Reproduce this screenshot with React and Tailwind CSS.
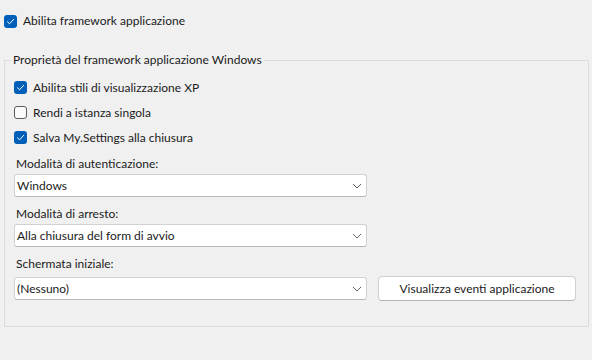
const font = { fontFamily: 'Lato, "Noto Sans", sans-serif' };

const Checkbox = ({ checked, label }) => (
  <label className="flex items-center gap-[6px]">
    {checked ? (
      <span className="flex h-[13px] w-[13px] items-center justify-center rounded-[3px] bg-[#005fb8]">
        <svg width="9" height="9" viewBox="0 0 9 9" fill="none">
          <path d="M1.5 4.8 L3.6 6.8 L7.6 2.4" stroke="white" strokeWidth="1" strokeLinecap="round" strokeLinejoin="round" />
        </svg>
      </span>
    ) : (
      <span className="h-[13px] w-[13px] rounded-[3px] border border-[#5d5d5d] bg-[#fbfbfb]" />
    )}
    <span>{label}</span>
  </label>
);

const Combo = ({ value }) => (
  <div className="flex h-[23px] w-[353px] items-center justify-between rounded-[3px] border border-[#d2d2d2] border-b-[#b8b8b8] bg-white pl-[2px] pr-[4px]">
    <span>{value}</span>
    <svg width="10" height="6" viewBox="0 0 10 6" fill="none">
      <path d="M1 1 L5 5 L9 1" stroke="#606060" strokeWidth="1" />
    </svg>
  </div>
);

export default function App() {
  return (
    <div className="h-[360px] w-[592px] bg-[#f0f0f0] text-[12px] leading-[16px] text-[#1b1b1b]" style={font}>
      <div className="pl-[4px] pt-[13px]">
        <Checkbox checked label="Abilita framework applicazione" />
      </div>

      <fieldset className="ml-[4px] mt-[23px] h-[275px] w-[585px] border border-[#dcdcdc] pl-[9px]">
        <legend className="-ml-[3px] px-[2px]">Proprietà del framework applicazione Windows</legend>

        <div className="mt-[7px] flex flex-col">
          <div className="flex h-[25px] items-center">
            <Checkbox checked label="Abilita stili di visualizzazione XP" />
          </div>
          <div className="flex h-[25px] items-center">
            <Checkbox label="Rendi a istanza singola" />
          </div>
          <div className="flex h-[25px] items-center">
            <Checkbox checked label="Salva My.Settings alla chiusura" />
          </div>
        </div>

        <div className="mt-[6px] flex flex-col">
          <div className="pl-[2px]">Modalità di autenticazione:</div>
          <div className="mt-[2px]">
            <Combo value="Windows" />
          </div>
          <div className="mt-[9px] pl-[2px]">Modalità di arresto:</div>
          <div className="mt-[2px]">
            <Combo value="Alla chiusura del form di avvio" />
          </div>
          <div className="mt-[9px] pl-[2px]">Schermata iniziale:</div>
          <div className="mt-[4px] flex items-center gap-[11px]">
            <Combo value="(Nessuno)" />
            <button className="h-[25px] w-[198px] rounded-[4px] border border-[#d0d0d0] border-b-[#b5b5b5] bg-white">
              Visualizza eventi applicazione
            </button>
          </div>
        </div>
      </fieldset>
    </div>
  );
}
